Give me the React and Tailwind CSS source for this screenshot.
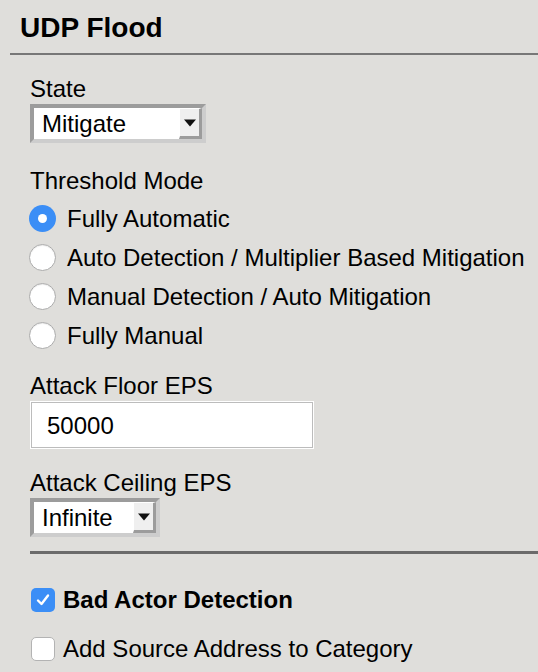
import React from "react";

function Select({ value, width }) {
  return (
    <div
      className={`flex h-[39px] ${width} border-4 border-t-[#9c9c9c] border-l-[#9c9c9c] border-b-[#cdcdcd] border-r-[#cdcdcd] bg-white`}
    >
      <div className="flex flex-1 items-center pl-[8px] pt-[1px] text-[24px] leading-[28px]">{value}</div>
      <div className="flex w-[23px] items-center justify-center border-t border-l border-t-white border-l-white border-b-[3px] border-r-[3px] border-b-[#9c9c9c] border-r-[#9c9c9c] bg-[#efefef]">
        <svg width="12" height="8" viewBox="0 0 12 8">
          <path d="M0 0.5 L12 0.5 L6 7.5 Z" fill="#111" />
        </svg>
      </div>
    </div>
  );
}

function Radio({ checked, label }) {
  return (
    <div className="flex h-[39px] items-center">
      {checked ? (
        <div className="ml-[-1px] flex h-[27px] w-[27px] items-center justify-center rounded-full bg-[#3b8ef6]">
          <div className="h-[9px] w-[9px] rounded-full bg-white" />
        </div>
      ) : (
        <div className="ml-[-1px] h-[27px] w-[27px] rounded-full border border-[#ababab] bg-white shadow-[inset_0_1px_1px_rgba(0,0,0,0.08)]" />
      )}
      <span className="ml-[11px] text-[24px] leading-[28px]">{label}</span>
    </div>
  );
}

export default function App() {
  return (
    <div className="h-[672px] w-[538px] overflow-hidden bg-[#dfdedb] font-['Liberation_Sans',Arial,sans-serif] text-black">
      <div className="pl-[20px] pt-[12px] text-[28px] font-bold leading-[32px]">UDP Flood</div>
      <div className="ml-[10px] mt-[9px] h-[2px] bg-[#777777]" />
      <div className="pl-[30px]">
        <div className="mt-[20px] text-[24px] leading-[28px]">State</div>
        <div className="mt-[1px]">
          <Select value="Mitigate" width="w-[176px]" />
        </div>
        <div className="mt-[24px] text-[24px] leading-[28px]">Threshold Mode</div>
        <div className="mt-[4px] flex flex-col">
          <Radio checked label="Fully Automatic" />
          <Radio label="Auto Detection / Multiplier Based Mitigation" />
          <Radio label="Manual Detection / Auto Mitigation" />
          <Radio label="Fully Manual" />
        </div>
        <div className="mt-[17px] text-[24px] leading-[28px]">Attack Floor EPS</div>
        <div className="ml-[1px] mt-[2px] flex h-[46px] w-[282px] items-center border border-[#bcbcbc] bg-white pl-[15px] pt-[1px] text-[24px] leading-[28px] ring-1 ring-white">
          50000
        </div>
        <div className="mt-[21px] text-[24px] leading-[28px]">Attack Ceiling EPS</div>
        <div className="mt-[1px]">
          <Select value="Infinite" width="w-[130px]" />
        </div>
        <div className="mt-[14px] h-[3px] bg-[#6b6b6b]" />
        <div className="mt-[32px] flex h-[28px] items-center">
          <div className="ml-[1px] flex h-[24px] w-[24px] items-center justify-center rounded-[5px] bg-[#3b8ef6]">
            <svg width="16" height="16" viewBox="0 0 16 16">
              <path d="M3 8.5 L6.5 12 L13 3.5" fill="none" stroke="white" strokeWidth="2.4" strokeLinecap="round" strokeLinejoin="round" />
            </svg>
          </div>
          <span className="ml-[8px] text-[24px] font-bold leading-[28px]">Bad Actor Detection</span>
        </div>
        <div className="mt-[21px] flex h-[28px] items-center">
          <div className="ml-[1px] h-[24px] w-[24px] rounded-[5px] border border-[#b3b3b3] bg-white" />
          <span className="ml-[8px] text-[24px] leading-[28px]">Add Source Address to Category</span>
        </div>
      </div>
    </div>
  );
}
